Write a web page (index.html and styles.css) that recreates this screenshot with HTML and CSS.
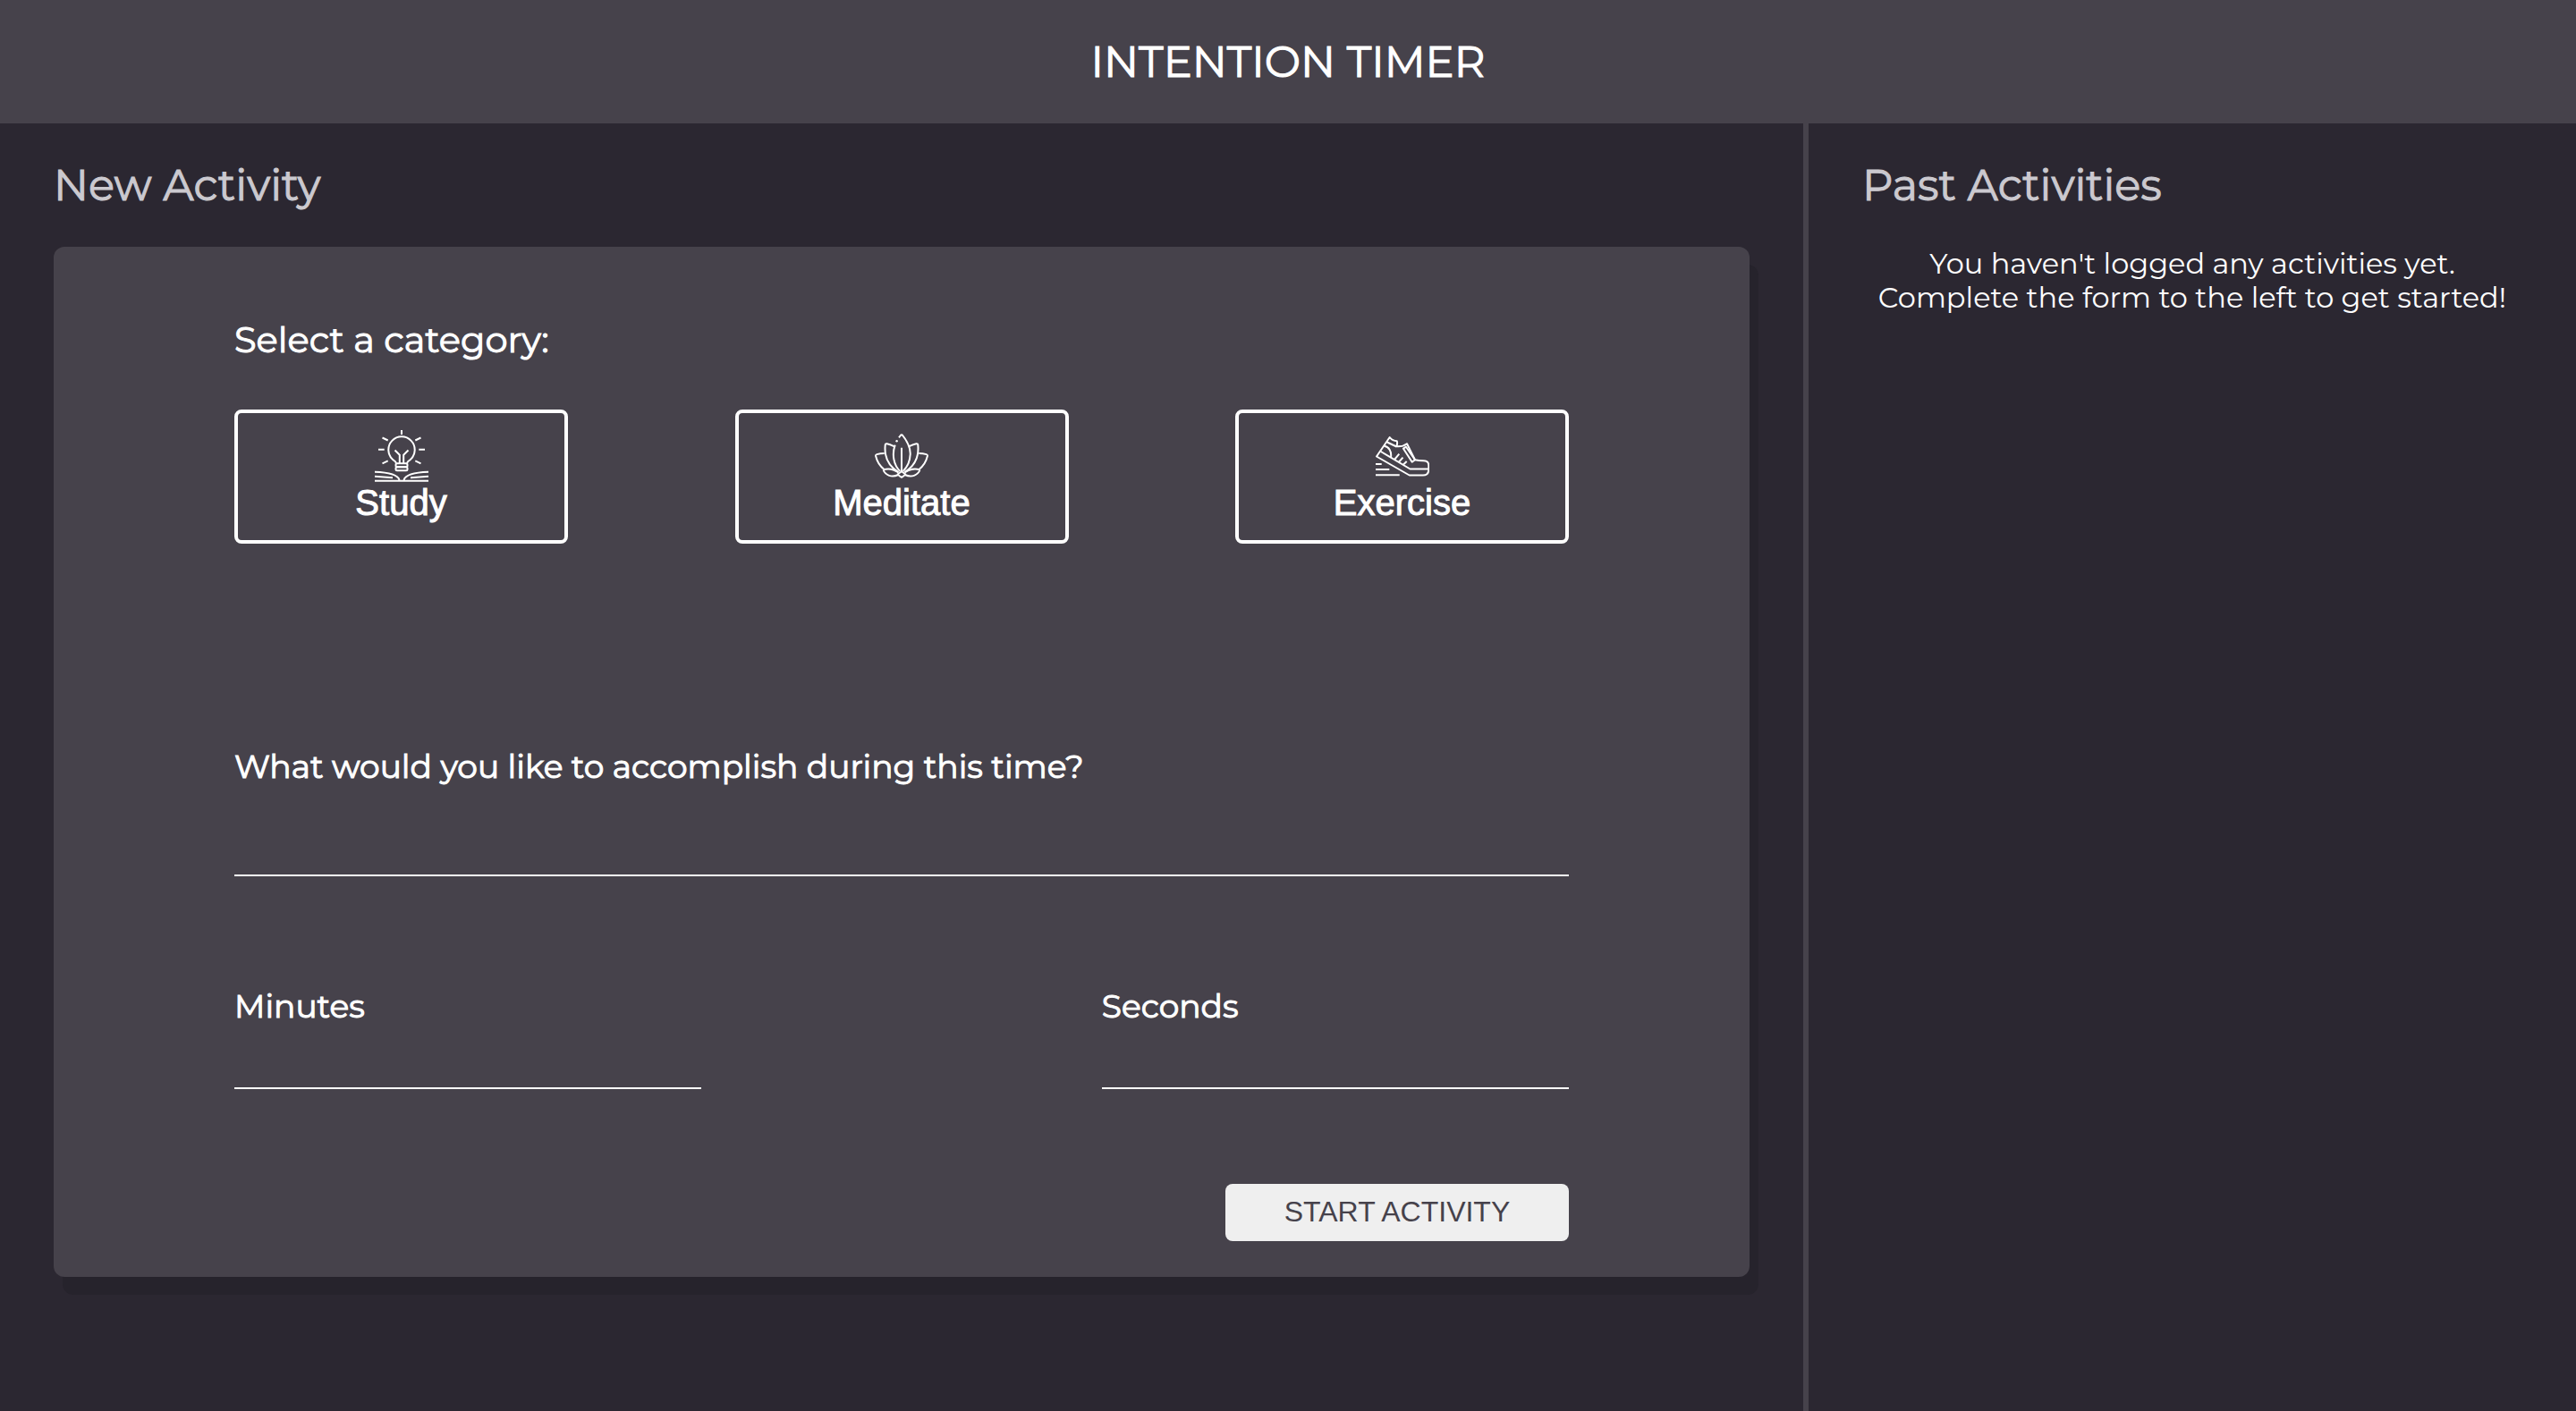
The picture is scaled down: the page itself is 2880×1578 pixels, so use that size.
FILE: index.html
```html
<!DOCTYPE html>
<html lang="en">
<head>
  <meta charset="utf-8">
  <meta name="viewport" content="width=device-width, initial-scale=1">
  <title>Intention Timer</title>
  <link rel="stylesheet" href="styles.css">
</head>
<body>
  <header class="site-header">
    <h1 class="site-title">INTENTION TIMER</h1>
  </header>
  <main class="layout">
    <section class="new-activity">
      <h2 class="section-title">New Activity</h2>
      <form class="activity-form">
        <fieldset class="categories">
          <legend class="categories-title">Select a category:</legend>
          <div class="category-row">
            <button class="category" type="button">
              <svg class="category-icon" viewBox="0 0 60 60" aria-hidden="true">
                <path d="M30 1v5M4 22.700h6.700M49.300 22.700H56M8.500 9.500l6.200 3M51.500 9.500l-6.200 3M8.500 38.300l6.200-3M51.500 38.300l-6.200-3"/>
                <path d="M24 38.500c0-2.200-2-3.200-3.600-4.300a14.700 14.700 0 1 1 19.200 0c-1.600 1.100-3.600 2.100-3.600 4.300"/>
                <path d="M22.500 23.500l5.300 5.200v9.500M37.500 23.500l-5.300 5.200v9.500"/>
                <rect x="23.500" y="38.300" width="13" height="4" rx="1.500"/>
                <rect x="23.500" y="42.300" width="13" height="4" rx="1.500"/>
                <path d="M0 47.800c12 .4 25.500 2.700 27.500 9M60 47.800c-12 .4-25.500 2.700-27.500 9M0 52.800l20 1.400M60 52.800l-20 1.400M0 57.700h60"/>
              </svg>
              <span>Study</span>
            </button>
            <button class="category" type="button">
              <svg class="category-icon" viewBox="0 0 60 60" aria-hidden="true">
                <path d="M27 9.300L28.800 7q1.200-1.400 2.400 0C36 13 39.500 20 39.700 27c0 8-3.200 15-8 20M22.700 17.700C19 28 21 40 28.300 47M30 20.700V47"/>
                <path d="M22 19.300c-3-1.300-6-2.500-8.500-3-1.200-.2-1.700.3-1.800 1.500C10.500 30 15 41 26.500 48M38 19.300c3-1.300 6-2.500 8.500-3 1.200-.2 1.700.3 1.800 1.500C49.500 30 45 41 33.500 48"/>
                <path d="M10.700 27c-3.200 0-6 .4-8.400 1.100-1 .3-1.400.9-1.200 1.900C2.500 36 5.500 41 10.500 45M49.300 27c3.200 0 6 .4 8.400 1.100 1 .3 1.400.9 1.200 1.900C57.500 36 54.500 41 49.500 45"/>
                <path d="M9.500 45.500C15 43.500 21 44.700 26.500 48.500M9.500 45.500C12 51.800 19 54.300 26.300 51M50.500 45.500C45 43.500 39 44.700 33.500 48.500M50.500 45.500C48 51.800 41 54.300 33.700 51"/>
                <path d="M30 47.300l4.200 2.900c-1 1.500-2.300 2.600-4.200 3.600-1.900-1-3.200-2.100-4.200-3.600z"/>
                <circle class="dot" cx="24.600" cy="13.300" r="1.200"/>
              </svg>
              <span>Meditate</span>
            </button>
            <button class="category" type="button">
              <svg class="category-icon" viewBox="0 0 60 60" aria-hidden="true">
                <path d="M15.700 9L1 30.500l36.700 21H53c4 0 6.300-2.500 6.300-6.500v-4.500c0-3-2-5.200-6-5.200-3.500 0-6.500-.3-9.300-1l-9-18.100c-3 2.200-7.500 3.500-11.700 3 1-2.500 1-4.500.4-6C21 13.200 18 12 15.700 9z"/>
                <path d="M5 24.500l33.500 20h21M9.500 18.800C15 19.500 18 25 17 31.500M12.800 14.500l10.500 5"/>
                <path d="M31 21.700l3-2 10 14.600-3.300 2.400z"/>
                <path d="M26.300 27.700L21 34M30.500 31.700L25.700 37M34.700 36l-4.200 4"/>
                <path d="M0 39h6.700M0 45h15.300M0 51.300h26.700"/>
              </svg>
              <span>Exercise</span>
            </button>
          </div>
        </fieldset>
        <div class="field">
          <label for="goal">What would you like to accomplish during this time?</label>
          <input class="goal-input" id="goal" type="text">
        </div>
        <div class="time-row">
          <div class="field time-field">
            <label for="minutes">Minutes</label>
            <input id="minutes" type="text" inputmode="numeric">
          </div>
          <div class="field time-field">
            <label for="seconds">Seconds</label>
            <input id="seconds" type="text" inputmode="numeric">
          </div>
        </div>
        <button class="start" type="submit">START ACTIVITY</button>
      </form>
    </section>
    <aside class="past-activities">
      <h2 class="section-title">Past Activities</h2>
      <p class="empty-note">You haven't logged any activities yet.<br>Complete the form to the left to get started!</p>
    </aside>
  </main>
</body>
</html>
```
FILE: styles.css
```css
* {
  box-sizing: border-box;
}

body {
  display: flex;
  flex-direction: column;
  min-height: 100vh;
  margin: 0;
  background: #2b2731;
  color: #fff;
  font-family: Montserrat, Inter, sans-serif;
  font-weight: 400;
}

h1,
h2,
p {
  margin: 0;
}

.site-title,
.section-title,
.categories-title,
.field label,
.category {
  -webkit-text-stroke: 1px currentColor;
}

.site-header {
  padding: 39px 60px;
  background: #46424b;
}

.site-title {
  font-size: 48px;
  font-weight: 400;
  line-height: 60px;
  text-align: center;
}

.layout {
  display: flex;
  flex: 1;
}

.new-activity {
  width: 70%;
  padding: 39px 60px 60px;
}

.section-title {
  color: #cbc9cf;
  font-size: 48px;
  font-weight: 400;
  line-height: 60px;
}

.activity-form {
  display: flex;
  flex-direction: column;
  margin-top: 39px;
  padding: 80px 202px 40px;
  border-radius: 12px;
  background: #46424b;
  box-shadow: 10px 20px 0 #26232c;
}

.categories {
  min-width: 0;
  margin: 0;
  padding: 0;
  border: 0;
}

.categories-title {
  padding: 0;
  font-size: 40px;
  line-height: 48px;
}

.category-row {
  display: flex;
  justify-content: space-between;
  margin-top: 54px;
}

.category {
  display: flex;
  flex-direction: column;
  align-items: center;
  width: 25%;
  padding: 18px 0 20px;
  border: 4px solid #fff;
  border-radius: 8px;
  background: transparent;
  color: #fff;
  font: 40px/44px Helvetica, "Liberation Sans", sans-serif;
}

.category-icon {
  width: 60px;
  height: 60px;
  fill: none;
  stroke: #fff;
  stroke-width: 2;
  stroke-linejoin: round;
}

.category-icon .dot {
  fill: #fff;
  stroke: none;
}

.field {
  display: flex;
  flex-direction: column;
}

.categories + .field {
  margin-top: 226px;
}

.field label {
  font-size: 36px;
  line-height: 46px;
}

.field input {
  width: 100%;
  height: 70px;
  padding: 0;
  border: 0;
  border-bottom: 2px solid #fff;
  border-radius: 0;
  outline: 0;
  background: transparent;
  color: #fff;
  font: inherit;
  font-size: 36px;
}

.field .goal-input {
  height: 100px;
}

.time-row {
  display: flex;
  justify-content: space-between;
  margin-top: 122px;
}

.time-field {
  width: 35%;
}

.start {
  align-self: flex-end;
  width: 384px;
  margin-top: 106px;
  padding: 12px 0 14px;
  border: 0;
  border-radius: 8px;
  background: #efefef;
  color: #46424b;
  font: 32px/38px Helvetica, "Liberation Sans", sans-serif;
}

.past-activities {
  flex: 1;
  padding-top: 39px;
  border-left: 6px solid #46424b;
}

.past-activities .section-title {
  padding-left: 60px;
}

.empty-note {
  margin-top: 39px;
  font-size: 32px;
  line-height: 38px;
  text-align: center;
}
```
